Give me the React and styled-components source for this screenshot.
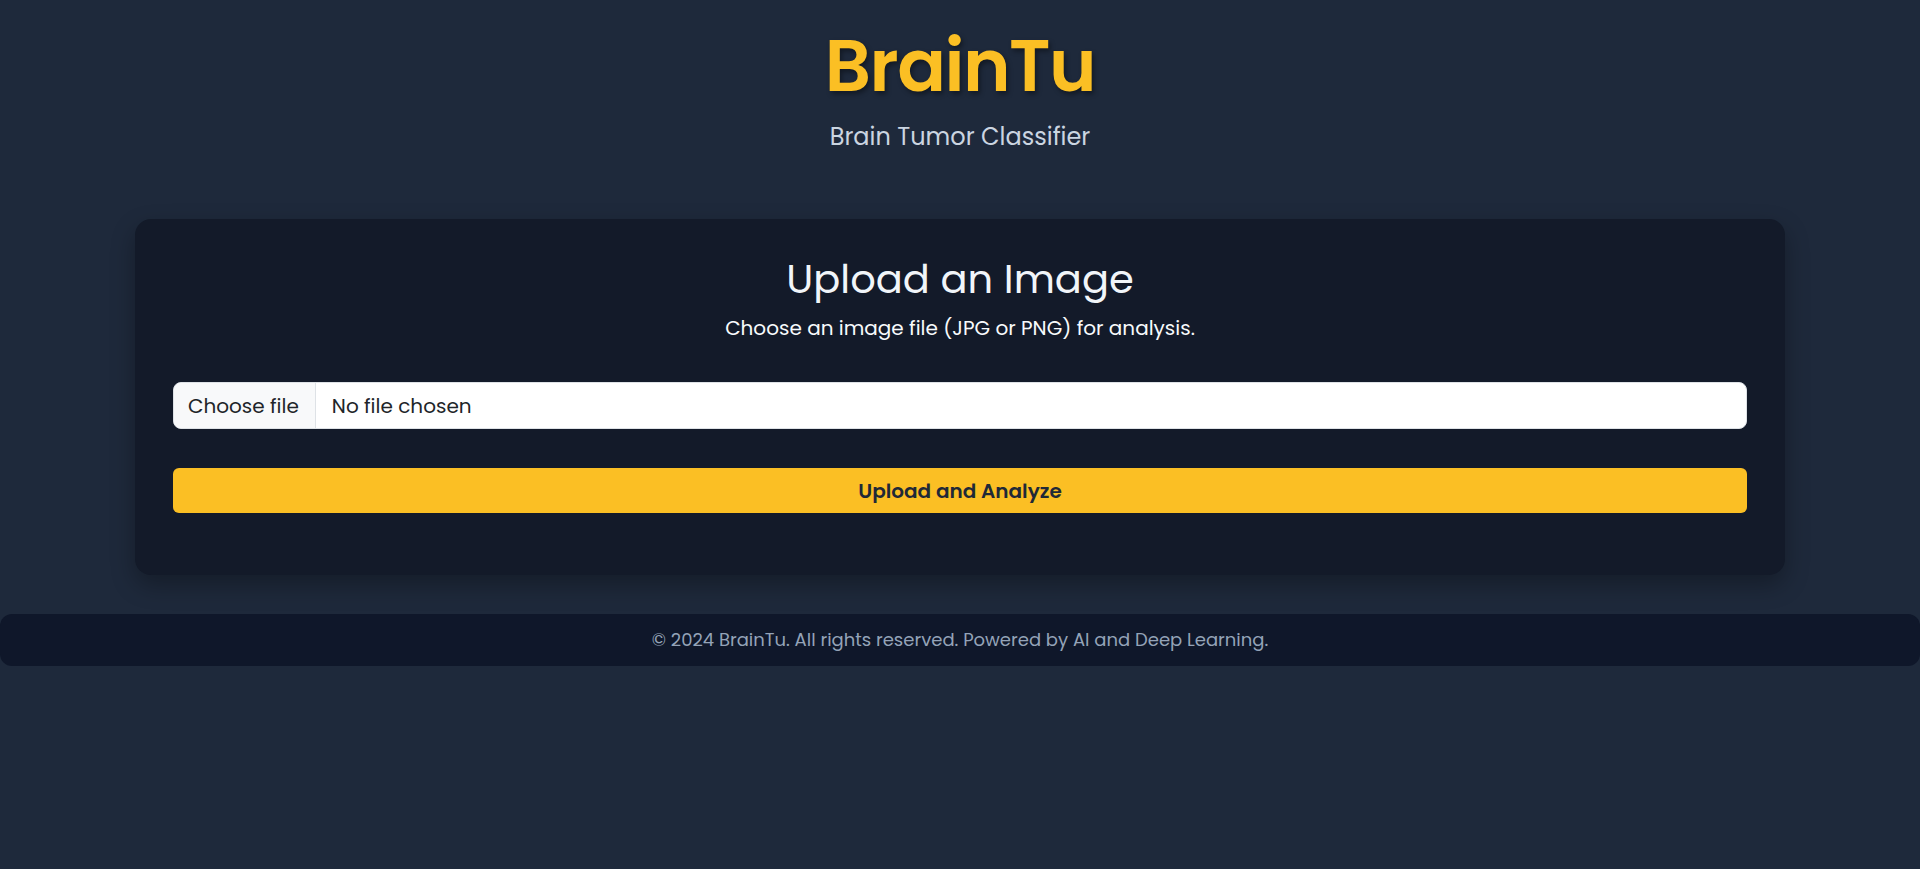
import React, { useState } from "react";
import styled, { createGlobalStyle } from "styled-components";

const GlobalStyle = createGlobalStyle`
  * { box-sizing: border-box; }
  html, body {
    margin: 0;
    padding: 0;
    background: #1e293b;
    font-family: "Poppins", Inter, "Noto Sans", sans-serif;
  }
`;

const Page = styled.div`
  min-height: 869px;
  background: #1e293b;
  display: flex;
  flex-direction: column;
  align-items: center;
`;

const Header = styled.header`
  padding-top: 23px;
  text-align: center;
`;

const Logo = styled.h1`
  margin: 0;
  font-size: 72px;
  line-height: 86px;
  font-weight: 600;
  letter-spacing: -1.5px;
  color: #fbbf24;
  text-shadow: 2px 3px 5px rgba(0, 0, 0, 0.4);
`;

const Tagline = styled.p`
  margin: 12px 0 0;
  font-size: 24px;
  line-height: 32px;
  color: #cbd5e1;
`;

const Card = styled.main`
  width: 1650px;
  margin-top: 66px;
  padding: 36px 38px 62px;
  background: #131a29;
  border-radius: 16px;
  box-shadow: 0 10px 25px rgba(0, 0, 0, 0.3);
  text-align: center;
`;

const Title = styled.h2`
  margin: 0;
  font-size: 40px;
  line-height: 48px;
  font-weight: 400;
  color: #f1f5f9;
`;

const Hint = styled.p`
  margin: 10px 0 0;
  font-size: 20px;
  line-height: 30px;
  color: #f8fafc;
`;

const Form = styled.form`
  margin-top: 39px;
  display: flex;
  flex-direction: column;
  gap: 39px;
`;

const FileField = styled.label`
  display: flex;
  align-items: stretch;
  height: 47px;
  background: #ffffff;
  border: 1px solid #dee2e6;
  border-radius: 8px;
  overflow: hidden;
  cursor: pointer;
  font-size: 20px;
  color: #212529;
  input { display: none; }
`;

const FileButton = styled.span`
  display: flex;
  align-items: center;
  padding: 0 16px 0 14px;
  background: #f8f9fa;
  border-right: 1px solid #dee2e6;
`;

const FileName = styled.span`
  display: flex;
  align-items: center;
  padding: 0 16px;
`;

const Submit = styled.button`
  height: 45px;
  border: none;
  border-radius: 6px;
  background: #fbbf24;
  color: #1f2937;
  font-family: inherit;
  font-size: 20px;
  font-weight: 600;
  cursor: pointer;
`;

const Footer = styled.footer`
  width: 100%;
  margin-top: 39px;
  height: 52px;
  padding-bottom: 2px;
  display: flex;
  align-items: center;
  justify-content: center;
  background: #0f172a;
  border-radius: 12px;
  color: #94a3b8;
  font-size: 18px;
`;

export default function App() {
  const [fileName, setFileName] = useState("No file chosen");

  return (
    <Page>
      <GlobalStyle />
      <Header>
        <Logo>BrainTu</Logo>
        <Tagline>Brain Tumor Classifier</Tagline>
      </Header>
      <Card>
        <Title>Upload an Image</Title>
        <Hint>Choose an image file (JPG or PNG) for analysis.</Hint>
        <Form onSubmit={(e) => e.preventDefault()}>
          <FileField>
            <input
              type="file"
              accept="image/png, image/jpeg"
              onChange={(e) =>
                setFileName(e.target.files[0]?.name || "No file chosen")
              }
            />
            <FileButton>Choose file</FileButton>
            <FileName>{fileName}</FileName>
          </FileField>
          <Submit type="submit">Upload and Analyze</Submit>
        </Form>
      </Card>
      <Footer>
        © 2024 BrainTu. All rights reserved. Powered by AI and Deep Learning.
      </Footer>
    </Page>
  );
}
